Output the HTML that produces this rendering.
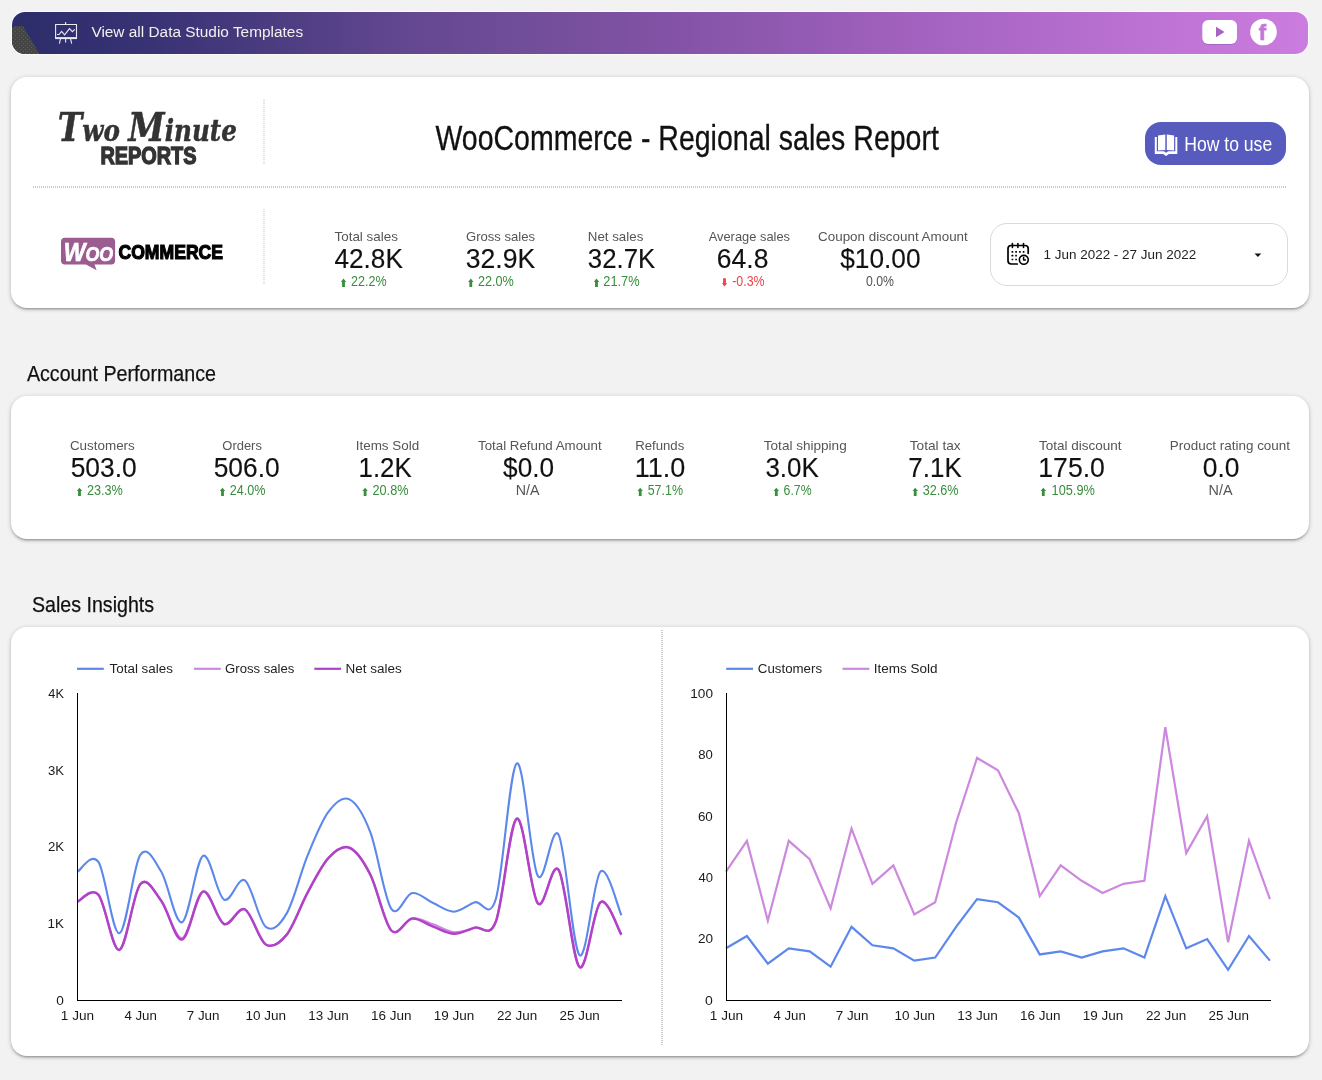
<!DOCTYPE html>
<html lang="en">
<head>
<meta charset="utf-8">
<title>WooCommerce - Regional sales Report</title>
<style>
  html,body{margin:0;padding:0;}
  body{width:1322px;height:1080px;background:#f2f2f2;position:relative;overflow:hidden;font-family:"Liberation Sans",Arial,sans-serif;}
  .topbar{position:absolute;left:12px;top:12px;width:1296px;height:42px;border-radius:13px;overflow:hidden;box-shadow:0 0 0 1px rgba(255,255,255,.6);
    background:linear-gradient(90deg,#2c2d6b 0%,#373274 10%,#4b3c80 20%,#62478f 30%,#724e99 40%,#8152a5 50%,#a362bf 70%,#bd73d4 88%,#cb7cdf 100%);}
  .card{position:absolute;left:11px;width:1298px;background:#fff;border-radius:16px;box-shadow:0 2px 2px 0 rgba(0,0,0,.14),0 3px 1px -2px rgba(0,0,0,.12),0 1px 5px 0 rgba(0,0,0,.2);}
  #c1{top:77px;height:231px;}
  #c2{top:396px;height:143px;}
  #c3{top:627px;height:429px;}
  .hdot{position:absolute;left:33px;top:186px;width:1253px;height:2px;background-image:repeating-linear-gradient(90deg,#aaa 0 1px,transparent 1px 2px);opacity:.62;}
  .vdot{position:absolute;width:2px;background-image:repeating-linear-gradient(180deg,#aaa 0 1px,transparent 1px 2px);opacity:.38;}
  .btn{position:absolute;left:1145px;top:122px;width:141px;height:43px;border-radius:16px;background:#575bbd;}
  .datebox{position:absolute;left:990px;top:223px;width:295.5px;height:61px;border:1px solid #dadada;border-radius:17px;background:#fff;}
  svg#ov{position:absolute;left:0;top:0;will-change:transform;}
</style>
</head>
<body>
<div class="topbar"></div>
<div class="card" id="c1"></div>
<div class="card" id="c2"></div>
<div class="card" id="c3"></div>
<div class="hdot"></div>
<div class="vdot" style="left:263px;top:99px;height:66px"></div>
<div class="vdot" style="left:263px;top:209px;height:76px"></div>
<div class="vdot" style="left:661px;top:630px;height:415px;opacity:.62"></div>
<div class="btn"></div>
<div class="datebox"></div>
<svg id="ov" width="1322" height="1080" viewBox="0 0 1322 1080">
<!-- decorative blob -->
<defs>
  <clipPath id="barclip"><rect x="12" y="12" width="1296" height="42" rx="13" ry="13"/></clipPath>
  <pattern id="dots" x="0" y="0" width="4" height="4" patternUnits="userSpaceOnUse"><rect x="1" y="1" width="1" height="1" fill="#8a5bb0"/><rect x="3" y="3" width="1" height="1" fill="#8a5bb0"/></pattern>
</defs>
<g clip-path="url(#barclip)">
  <path d="M12 27.5 L14 26.3 L23 26 L39.5 54 L12 54Z" fill="#454545"/>
  <path d="M12 27.5 L14 26.3 L23 26 L39.5 54 L12 54Z" fill="url(#dots)" opacity=".55"/>
</g>
<!-- presentation icon -->
<g fill="none" stroke="#ece9f3" stroke-width="1.1" stroke-linejoin="miter">
  <path d="M55.6 24.5H76.5V37.8H55.6Z"/>
  <path d="M55.1 38.3H77" stroke-width="1.6"/>
  <path d="M65.6 22V24.5 M60.4 39L59.4 43.6 M65.6 39V42.6 M70.6 39L71.7 43.6"/>
  <path d="M57 34.5H59L61.6 31.3L64.6 34.8L69.5 28.7L72.4 31.7L74.8 29.4" stroke-width="1.1"/>
</g>
<!-- youtube -->
<rect x="1202.6" y="21" width="34.2" height="24" rx="6" ry="6" fill="#8e55b4" opacity=".55"/>
<rect x="1202.3" y="20" width="34.7" height="24" rx="6" ry="6" fill="#fff"/>
<path d="M1216 26.8L1224.6 32L1216 37.2Z" fill="#a763c3"/>
<!-- facebook -->
<circle cx="1263.5" cy="32" r="13.3" fill="#fff"/>
<text x="1258.8" y="39.8" font-size="22" font-weight="bold" fill="#c277d9" stroke="#c277d9" stroke-width="0.7" font-family='"Liberation Sans", Arial, sans-serif'>f</text>
<!-- book icon -->
<g fill="#fff">
  <path d="M1158 135.4 L1165.3 134.5 L1165.3 150 L1158 150.4 Z"/>
  <path d="M1166.8 134.5 L1174.1 135.4 L1174.1 150.4 L1166.8 150 Z"/>
  <path d="M1154.8 137 L1156.8 137 L1156.8 151.3 L1164 151.3 L1166.05 152.8 L1168.1 151.3 L1175.3 151.3 L1175.3 137 L1177.3 137 L1177.3 154.1 L1169 154.1 L1166.05 156.1 L1163.1 154.1 L1154.8 154.1 Z"/>
</g>
<!-- calendar icon -->
<g fill="none" stroke="#000" stroke-width="1.7" stroke-linecap="round" stroke-linejoin="round">
  <path d="M1017.3 264H1011.2Q1008 264 1008 260.8V248.7Q1008 245.5 1011.2 245.5H1025Q1028.2 245.5 1028.2 248.7V253.3"/>
  <path d="M1012.4 243.5V247.5 M1017.9 243.5V247.5 M1023.5 243.5V247.5" stroke-width="1.6"/>
  <circle cx="1023.8" cy="259.8" r="4.45" stroke-width="1.6"/>
  <path d="M1023.6 257.6V260H1025.4" stroke-width="1.5"/>
</g>
<g fill="#000"><rect x="1011.55" y="251.05" width="1.7" height="1.7" rx=".3"/><rect x="1015.25" y="251.05" width="1.7" height="1.7" rx=".3"/><rect x="1019.05" y="251.05" width="1.7" height="1.7" rx=".3"/><rect x="1022.75" y="251.05" width="1.7" height="1.7" rx=".3"/><rect x="1011.55" y="254.85" width="1.7" height="1.7" rx=".3"/><rect x="1015.25" y="254.85" width="1.7" height="1.7" rx=".3"/><rect x="1011.55" y="258.65" width="1.7" height="1.7" rx=".3"/><rect x="1015.25" y="258.65" width="1.7" height="1.7" rx=".3"/></g>
<path d="M1254.5 253.4L1261.3 253.4L1257.9 257Z" fill="#111"/>
<!-- Two Minute Reports logo -->
<text x="57.8" y="141" font-size="30" font-weight="bold" font-style="italic" fill="#333" stroke="#333" stroke-width="0.5" font-family='"DejaVu Serif", "Liberation Serif", serif' textLength="179" lengthAdjust="spacingAndGlyphs"><tspan font-size="40">T</tspan>wo <tspan font-size="40">M</tspan>inute</text>
<text x="100.5" y="164.1" font-size="24.2" font-weight="bold" fill="#333" stroke="#333" stroke-width="1.4" stroke-linejoin="miter" font-family='"Liberation Sans", Arial, sans-serif' textLength="96" lengthAdjust="spacingAndGlyphs">REPORTS</text>
<!-- WooCommerce logo -->
<path d="M65 237.8H111.1Q115.1 237.8 115.1 241.8V260.6Q115.1 264.6 111.1 264.6H94.5L96.6 270.2L86 264.6H65Q61 264.6 61 260.6V241.8Q61 237.8 65 237.8Z" fill="#9b5c8f"/>
<text x="63.8" y="261.2" font-size="20.5" font-weight="bold" font-style="italic" fill="#fff" stroke="#fff" stroke-width="0.7" font-family='"Liberation Sans", Arial, sans-serif' textLength="49.4" lengthAdjust="spacingAndGlyphs"><tspan font-size="26.5">W</tspan>OO</text>
<text x="118.5" y="258.8" font-size="20.2" font-weight="bold" fill="#000" stroke="#000" stroke-width="1.2" stroke-linejoin="miter" font-family='"Liberation Sans", Arial, sans-serif' textLength="104.5" lengthAdjust="spacingAndGlyphs">COMMERCE</text>

<text x="334.5" y="241.2" font-size="13.6" fill="#555" font-weight="normal" font-style="normal" font-family='"Liberation Sans", Arial, sans-serif' textLength="63.4" lengthAdjust="spacingAndGlyphs" >Total sales</text>
<text x="334.4" y="267.5" font-size="27.5" fill="#111" font-weight="normal" font-style="normal" font-family='"Liberation Sans", Arial, sans-serif' textLength="68.5" lengthAdjust="spacingAndGlyphs" stroke="#111" stroke-width="0.15">42.8K</text>
<path d="M343.5 278.5 L346.2 281.9 L344.9 281.9 L344.9 286.9 L342.1 286.9 L342.1 281.9 L340.8 281.9 Z" fill="#388e3c"/>
<text x="351.1" y="285.8" font-size="14" fill="#388e3c" font-weight="normal" font-style="normal" font-family='"Liberation Sans", Arial, sans-serif' textLength="35.6" lengthAdjust="spacingAndGlyphs" >22.2%</text>
<text x="466.0" y="241.2" font-size="13.6" fill="#555" font-weight="normal" font-style="normal" font-family='"Liberation Sans", Arial, sans-serif' textLength="69.1" lengthAdjust="spacingAndGlyphs" >Gross sales</text>
<text x="465.7" y="267.5" font-size="27.5" fill="#111" font-weight="normal" font-style="normal" font-family='"Liberation Sans", Arial, sans-serif' textLength="69.5" lengthAdjust="spacingAndGlyphs" stroke="#111" stroke-width="0.15">32.9K</text>
<path d="M470.8 278.5 L473.5 281.9 L472.2 281.9 L472.2 286.9 L469.4 286.9 L469.4 281.9 L468.1 281.9 Z" fill="#388e3c"/>
<text x="477.9" y="285.8" font-size="14" fill="#388e3c" font-weight="normal" font-style="normal" font-family='"Liberation Sans", Arial, sans-serif' textLength="35.9" lengthAdjust="spacingAndGlyphs" >22.0%</text>
<text x="587.8" y="241.2" font-size="13.6" fill="#555" font-weight="normal" font-style="normal" font-family='"Liberation Sans", Arial, sans-serif' textLength="55.5" lengthAdjust="spacingAndGlyphs" >Net sales</text>
<text x="587.8" y="267.5" font-size="27.5" fill="#111" font-weight="normal" font-style="normal" font-family='"Liberation Sans", Arial, sans-serif' textLength="67.4" lengthAdjust="spacingAndGlyphs" stroke="#111" stroke-width="0.15">32.7K</text>
<path d="M596.5 278.5 L599.2 281.9 L597.9 281.9 L597.9 286.9 L595.1 286.9 L595.1 281.9 L593.8 281.9 Z" fill="#388e3c"/>
<text x="603.3" y="285.8" font-size="14" fill="#388e3c" font-weight="normal" font-style="normal" font-family='"Liberation Sans", Arial, sans-serif' textLength="36.3" lengthAdjust="spacingAndGlyphs" >21.7%</text>
<text x="708.7" y="241.2" font-size="13.6" fill="#555" font-weight="normal" font-style="normal" font-family='"Liberation Sans", Arial, sans-serif' textLength="81.3" lengthAdjust="spacingAndGlyphs" >Average sales</text>
<text x="716.8" y="267.5" font-size="27.5" fill="#111" font-weight="normal" font-style="normal" font-family='"Liberation Sans", Arial, sans-serif' textLength="51.6" lengthAdjust="spacingAndGlyphs" stroke="#111" stroke-width="0.15">64.8</text>
<path d="M724.5 286.6 L727.2 283.2 L725.9 283.2 L725.9 278.2 L723.1 278.2 L723.1 283.2 L721.8 283.2 Z" fill="#ef4444"/>
<text x="732.2" y="285.8" font-size="14" fill="#ef4444" font-weight="normal" font-style="normal" font-family='"Liberation Sans", Arial, sans-serif' textLength="32.4" lengthAdjust="spacingAndGlyphs" >-0.3%</text>
<text x="818.1" y="241.2" font-size="13.6" fill="#555" font-weight="normal" font-style="normal" font-family='"Liberation Sans", Arial, sans-serif' textLength="149.7" lengthAdjust="spacingAndGlyphs" >Coupon discount Amount</text>
<text x="840.2" y="267.5" font-size="27.5" fill="#111" font-weight="normal" font-style="normal" font-family='"Liberation Sans", Arial, sans-serif' textLength="80.3" lengthAdjust="spacingAndGlyphs" stroke="#111" stroke-width="0.15">$10.00</text>
<text x="865.9" y="285.8" font-size="14" fill="#555" font-weight="normal" font-style="normal" font-family='"Liberation Sans", Arial, sans-serif' textLength="28.0" lengthAdjust="spacingAndGlyphs" >0.0%</text>
<text x="69.9" y="450.0" font-size="13.6" fill="#555" font-weight="normal" font-style="normal" font-family='"Liberation Sans", Arial, sans-serif' textLength="64.9" lengthAdjust="spacingAndGlyphs" >Customers</text>
<text x="70.7" y="477.0" font-size="27.5" fill="#111" font-weight="normal" font-style="normal" font-family='"Liberation Sans", Arial, sans-serif' textLength="66.0" lengthAdjust="spacingAndGlyphs" stroke="#111" stroke-width="0.15">503.0</text>
<path d="M79.5 487.7 L82.2 491.1 L80.9 491.1 L80.9 496.1 L78.1 496.1 L78.1 491.1 L76.8 491.1 Z" fill="#388e3c"/>
<text x="86.9" y="495.0" font-size="14" fill="#388e3c" font-weight="normal" font-style="normal" font-family='"Liberation Sans", Arial, sans-serif' textLength="36.0" lengthAdjust="spacingAndGlyphs" >23.3%</text>
<text x="222.3" y="450.0" font-size="13.6" fill="#555" font-weight="normal" font-style="normal" font-family='"Liberation Sans", Arial, sans-serif' textLength="39.6" lengthAdjust="spacingAndGlyphs" >Orders</text>
<text x="213.7" y="477.0" font-size="27.5" fill="#111" font-weight="normal" font-style="normal" font-family='"Liberation Sans", Arial, sans-serif' textLength="66.0" lengthAdjust="spacingAndGlyphs" stroke="#111" stroke-width="0.15">506.0</text>
<path d="M222.5 487.7 L225.2 491.1 L223.9 491.1 L223.9 496.1 L221.1 496.1 L221.1 491.1 L219.8 491.1 Z" fill="#388e3c"/>
<text x="229.8" y="495.0" font-size="14" fill="#388e3c" font-weight="normal" font-style="normal" font-family='"Liberation Sans", Arial, sans-serif' textLength="35.7" lengthAdjust="spacingAndGlyphs" >24.0%</text>
<text x="355.7" y="450.0" font-size="13.6" fill="#555" font-weight="normal" font-style="normal" font-family='"Liberation Sans", Arial, sans-serif' textLength="63.5" lengthAdjust="spacingAndGlyphs" >Items Sold</text>
<text x="358.6" y="477.0" font-size="27.5" fill="#111" font-weight="normal" font-style="normal" font-family='"Liberation Sans", Arial, sans-serif' textLength="53.1" lengthAdjust="spacingAndGlyphs" stroke="#111" stroke-width="0.15">1.2K</text>
<path d="M365.1 487.7 L367.8 491.1 L366.5 491.1 L366.5 496.1 L363.7 496.1 L363.7 491.1 L362.4 491.1 Z" fill="#388e3c"/>
<text x="372.5" y="495.0" font-size="14" fill="#388e3c" font-weight="normal" font-style="normal" font-family='"Liberation Sans", Arial, sans-serif' textLength="36.0" lengthAdjust="spacingAndGlyphs" >20.8%</text>
<text x="478.0" y="450.0" font-size="13.6" fill="#555" font-weight="normal" font-style="normal" font-family='"Liberation Sans", Arial, sans-serif' textLength="123.6" lengthAdjust="spacingAndGlyphs" >Total Refund Amount</text>
<text x="503.1" y="477.0" font-size="27.5" fill="#111" font-weight="normal" font-style="normal" font-family='"Liberation Sans", Arial, sans-serif' textLength="51.0" lengthAdjust="spacingAndGlyphs" stroke="#111" stroke-width="0.15">$0.0</text>
<text x="515.7" y="495.0" font-size="14" fill="#555" font-weight="normal" font-style="normal" font-family='"Liberation Sans", Arial, sans-serif' textLength="23.8" lengthAdjust="spacingAndGlyphs" >N/A</text>
<text x="635.2" y="450.0" font-size="13.6" fill="#555" font-weight="normal" font-style="normal" font-family='"Liberation Sans", Arial, sans-serif' textLength="49.1" lengthAdjust="spacingAndGlyphs" >Refunds</text>
<text x="634.8" y="477.0" font-size="27.5" fill="#111" font-weight="normal" font-style="normal" font-family='"Liberation Sans", Arial, sans-serif' textLength="50.6" lengthAdjust="spacingAndGlyphs" stroke="#111" stroke-width="0.15">11.0</text>
<path d="M640.2 487.7 L642.9 491.1 L641.6 491.1 L641.6 496.1 L638.8 496.1 L638.8 491.1 L637.5 491.1 Z" fill="#388e3c"/>
<text x="647.7" y="495.0" font-size="14" fill="#388e3c" font-weight="normal" font-style="normal" font-family='"Liberation Sans", Arial, sans-serif' textLength="35.3" lengthAdjust="spacingAndGlyphs" >57.1%</text>
<text x="763.8" y="450.0" font-size="13.6" fill="#555" font-weight="normal" font-style="normal" font-family='"Liberation Sans", Arial, sans-serif' textLength="82.9" lengthAdjust="spacingAndGlyphs" >Total shipping</text>
<text x="765.4" y="477.0" font-size="27.5" fill="#111" font-weight="normal" font-style="normal" font-family='"Liberation Sans", Arial, sans-serif' textLength="53.4" lengthAdjust="spacingAndGlyphs" stroke="#111" stroke-width="0.15">3.0K</text>
<path d="M776.3 487.7 L779.0 491.1 L777.7 491.1 L777.7 496.1 L774.9 496.1 L774.9 491.1 L773.6 491.1 Z" fill="#388e3c"/>
<text x="783.6" y="495.0" font-size="14" fill="#388e3c" font-weight="normal" font-style="normal" font-family='"Liberation Sans", Arial, sans-serif' textLength="28.0" lengthAdjust="spacingAndGlyphs" >6.7%</text>
<text x="909.8" y="450.0" font-size="13.6" fill="#555" font-weight="normal" font-style="normal" font-family='"Liberation Sans", Arial, sans-serif' textLength="50.8" lengthAdjust="spacingAndGlyphs" >Total tax</text>
<text x="908.3" y="477.0" font-size="27.5" fill="#111" font-weight="normal" font-style="normal" font-family='"Liberation Sans", Arial, sans-serif' textLength="53.4" lengthAdjust="spacingAndGlyphs" stroke="#111" stroke-width="0.15">7.1K</text>
<path d="M915.2 487.7 L917.9 491.1 L916.6 491.1 L916.6 496.1 L913.8 496.1 L913.8 491.1 L912.5 491.1 Z" fill="#388e3c"/>
<text x="922.7" y="495.0" font-size="14" fill="#388e3c" font-weight="normal" font-style="normal" font-family='"Liberation Sans", Arial, sans-serif' textLength="35.7" lengthAdjust="spacingAndGlyphs" >32.6%</text>
<text x="1038.9" y="450.0" font-size="13.6" fill="#555" font-weight="normal" font-style="normal" font-family='"Liberation Sans", Arial, sans-serif' textLength="82.6" lengthAdjust="spacingAndGlyphs" >Total discount</text>
<text x="1038.3" y="477.0" font-size="27.5" fill="#111" font-weight="normal" font-style="normal" font-family='"Liberation Sans", Arial, sans-serif' textLength="66.6" lengthAdjust="spacingAndGlyphs" stroke="#111" stroke-width="0.15">175.0</text>
<path d="M1043.3 487.7 L1046.0 491.1 L1044.7 491.1 L1044.7 496.1 L1041.9 496.1 L1041.9 491.1 L1040.6 491.1 Z" fill="#388e3c"/>
<text x="1051.6" y="495.0" font-size="14" fill="#388e3c" font-weight="normal" font-style="normal" font-family='"Liberation Sans", Arial, sans-serif' textLength="43.2" lengthAdjust="spacingAndGlyphs" >105.9%</text>
<text x="1169.8" y="450.0" font-size="13.6" fill="#555" font-weight="normal" font-style="normal" font-family='"Liberation Sans", Arial, sans-serif' textLength="120.2" lengthAdjust="spacingAndGlyphs" >Product rating count</text>
<text x="1202.8" y="477.0" font-size="27.5" fill="#111" font-weight="normal" font-style="normal" font-family='"Liberation Sans", Arial, sans-serif' textLength="36.7" lengthAdjust="spacingAndGlyphs" stroke="#111" stroke-width="0.15">0.0</text>
<text x="1208.5" y="495.0" font-size="14" fill="#555" font-weight="normal" font-style="normal" font-family='"Liberation Sans", Arial, sans-serif' textLength="24.0" lengthAdjust="spacingAndGlyphs" >N/A</text>
<text x="26.9" y="380.9" font-size="22.5" fill="#111" font-weight="normal" font-style="normal" font-family='"Liberation Sans", Arial, sans-serif' textLength="189.1" lengthAdjust="spacingAndGlyphs" stroke="#111" stroke-width="0.25">Account Performance</text>
<text x="31.9" y="611.6" font-size="22.5" fill="#111" font-weight="normal" font-style="normal" font-family='"Liberation Sans", Arial, sans-serif' textLength="122.2" lengthAdjust="spacingAndGlyphs" stroke="#111" stroke-width="0.25">Sales Insights</text>
<text x="435.4" y="149.8" font-size="34.5" fill="#111" font-weight="normal" font-style="normal" font-family='"Liberation Sans", Arial, sans-serif' textLength="503.5" lengthAdjust="spacingAndGlyphs" stroke="#111" stroke-width="0.3">WooCommerce - Regional sales Report</text>
<text x="91.4" y="36.9" font-size="15.5" fill="#f3f1ee" font-weight="normal" font-style="normal" font-family='"Liberation Sans", Arial, sans-serif' textLength="211.7" lengthAdjust="spacingAndGlyphs" >View all Data Studio Templates</text>
<text x="1184.2" y="150.7" font-size="20.3" fill="#fff" font-weight="normal" font-style="normal" font-family='"Liberation Sans", Arial, sans-serif' textLength="88.0" lengthAdjust="spacingAndGlyphs" >How to use</text>
<text x="1043.5" y="258.8" font-size="13" fill="#222" font-weight="normal" font-style="normal" font-family='"Liberation Sans", Arial, sans-serif' textLength="152.7" lengthAdjust="spacingAndGlyphs" >1 Jun 2022 - 27 Jun 2022</text>
<path d="M77.50 871.71 C80.99 870.08 91.45 851.63 98.42 861.89 C105.39 872.15 112.37 934.43 119.34 933.27 C126.31 932.10 133.29 865.19 140.26 854.91 C147.23 844.62 154.21 860.34 161.18 871.56 C168.15 882.78 175.13 924.84 182.10 922.22 C189.07 919.59 196.05 859.60 203.02 855.83 C209.99 852.05 216.97 895.48 223.94 899.57 C230.91 903.67 237.89 875.85 244.86 880.39 C251.83 884.93 258.81 921.32 265.78 926.82 C272.75 932.32 279.73 925.28 286.70 913.39 C293.67 901.49 300.65 872.39 307.62 855.44 C314.59 838.49 321.57 821.03 328.54 811.69 C335.51 802.36 342.49 795.96 349.46 799.41 C356.43 802.87 363.41 814.19 370.38 832.42 C377.35 850.65 384.33 898.68 391.30 908.78 C398.27 918.89 405.25 894.01 412.22 893.05 C419.19 892.09 426.17 899.92 433.14 903.03 C440.11 906.14 447.09 911.83 454.06 911.70 C461.03 911.57 468.01 904.41 474.98 902.26 C481.95 900.11 488.93 921.96 495.90 898.81 C502.87 875.65 509.85 767.19 516.82 763.34 C523.79 759.49 530.77 863.78 537.74 875.70 C544.71 887.63 551.69 821.62 558.66 834.87 C565.63 848.13 572.61 949.10 579.58 955.22 C586.55 961.33 593.53 878.21 600.50 871.56 C607.47 864.91 617.93 908.02 621.42 915.31" fill="none" stroke="#5c88ec" stroke-width="2.1" stroke-linejoin="round"/>
<path d="M77.50 901.65 C80.99 900.49 91.45 886.69 98.42 894.74 C105.39 902.78 112.37 951.67 119.34 949.92 C126.31 948.17 133.29 892.42 140.26 884.22 C147.23 876.02 154.21 891.76 161.18 900.73 C168.15 909.69 175.13 939.55 182.10 938.03 C189.07 936.50 196.05 893.93 203.02 891.59 C209.99 889.25 216.97 921.01 223.94 923.98 C230.91 926.95 237.89 905.98 244.86 909.40 C251.83 912.81 258.81 940.26 265.78 944.47 C272.75 948.68 279.73 943.30 286.70 934.65 C293.67 926.00 300.65 905.38 307.62 892.59 C314.59 879.80 321.57 865.37 328.54 857.90 C335.51 850.43 342.49 844.97 349.46 847.77 C356.43 850.57 363.41 860.92 370.38 874.71 C377.35 888.50 384.33 923.20 391.30 930.50 C398.27 937.81 405.25 919.57 412.22 918.53 C419.19 917.49 426.17 922.01 433.14 924.29 C440.11 926.56 447.09 931.64 454.06 932.19 C461.03 932.74 468.01 929.38 474.98 927.59 C481.95 925.80 488.93 939.60 495.90 921.45 C502.87 903.30 509.85 821.71 516.82 818.68 C523.79 815.65 530.77 894.70 537.74 903.26 C544.71 911.82 551.69 859.38 558.66 870.02 C565.63 880.67 572.61 961.74 579.58 967.11 C586.55 972.49 593.53 907.66 600.50 902.26 C607.47 896.86 617.93 929.31 621.42 934.73" fill="none" stroke="#cd88df" stroke-width="2.1" stroke-linejoin="round"/>
<path d="M77.50 901.65 C80.99 900.49 91.45 886.69 98.42 894.74 C105.39 902.78 112.37 951.67 119.34 949.92 C126.31 948.17 133.29 892.42 140.26 884.22 C147.23 876.02 154.21 891.50 161.18 900.73 C168.15 909.95 175.13 941.08 182.10 939.56 C189.07 938.04 196.05 894.19 203.02 891.59 C209.99 889.00 216.97 921.01 223.94 923.98 C230.91 926.95 237.89 905.98 244.86 909.40 C251.83 912.81 258.81 940.26 265.78 944.47 C272.75 948.68 279.73 943.30 286.70 934.65 C293.67 926.00 300.65 905.38 307.62 892.59 C314.59 879.80 321.57 865.37 328.54 857.90 C335.51 850.43 342.49 844.97 349.46 847.77 C356.43 850.57 363.41 860.92 370.38 874.71 C377.35 888.50 384.33 923.20 391.30 930.50 C398.27 937.81 405.25 919.18 412.22 918.53 C419.19 917.88 426.17 924.06 433.14 926.59 C440.11 929.12 447.09 933.56 454.06 933.73 C461.03 933.89 468.01 929.63 474.98 927.59 C481.95 925.54 488.93 939.60 495.90 921.45 C502.87 903.30 509.85 821.71 516.82 818.68 C523.79 815.65 530.77 894.70 537.74 903.26 C544.71 911.82 551.69 859.38 558.66 870.02 C565.63 880.67 572.61 961.74 579.58 967.11 C586.55 972.49 593.53 907.66 600.50 902.26 C607.47 896.86 617.93 929.31 621.42 934.73" fill="none" stroke="#b142c8" stroke-width="2.5" stroke-linejoin="round"/>
<path d="M726.00 871.56 L746.92 840.86 L767.84 920.68 L788.76 840.86 L809.68 859.28 L830.60 908.40 L851.52 828.58 L872.44 883.84 L893.36 865.42 L914.28 914.54 L935.20 902.26 L956.12 822.44 L977.04 757.97 L997.96 770.25 L1018.88 813.23 L1039.80 896.12 L1060.72 865.42 L1081.64 880.77 L1102.56 893.05 L1123.48 883.84 L1144.40 880.77 L1165.32 727.27 L1186.24 853.14 L1207.16 816.30 L1228.08 942.17 L1249.00 840.86 L1269.92 899.19" fill="none" stroke="#cd88df" stroke-width="2.2" stroke-linejoin="miter"/>
<path d="M726.00 948.31 L746.92 936.03 L767.84 963.66 L788.76 948.31 L809.68 951.38 L830.60 966.73 L851.52 926.82 L872.44 945.24 L893.36 948.31 L914.28 960.59 L935.20 957.52 L956.12 926.82 L977.04 899.19 L997.96 902.26 L1018.88 917.61 L1039.80 954.45 L1060.72 951.38 L1081.64 957.52 L1102.56 951.38 L1123.48 948.31 L1144.40 957.52 L1165.32 896.12 L1186.24 948.31 L1207.16 939.10 L1228.08 969.80 L1249.00 936.03 L1269.92 960.59" fill="none" stroke="#5c88ec" stroke-width="2.2" stroke-linejoin="miter"/>
<path d="M77.5 693.0 V1000.5 H622.0" fill="none" stroke="#000" stroke-width="1" shape-rendering="crispEdges"/>
<path d="M726.5 693.0 V1000.5 H1271.0" fill="none" stroke="#000" stroke-width="1" shape-rendering="crispEdges"/>
<text x="56.3" y="1004.7" font-size="13" fill="#1a1a1a" font-weight="normal" font-style="normal" font-family='"Liberation Sans", Arial, sans-serif' textLength="7.6" lengthAdjust="spacingAndGlyphs" >0</text>
<text x="47.6" y="928.0" font-size="13" fill="#1a1a1a" font-weight="normal" font-style="normal" font-family='"Liberation Sans", Arial, sans-serif' textLength="16.4" lengthAdjust="spacingAndGlyphs" >1K</text>
<text x="47.9" y="851.2" font-size="13" fill="#1a1a1a" font-weight="normal" font-style="normal" font-family='"Liberation Sans", Arial, sans-serif' textLength="16.2" lengthAdjust="spacingAndGlyphs" >2K</text>
<text x="47.9" y="774.5" font-size="13" fill="#1a1a1a" font-weight="normal" font-style="normal" font-family='"Liberation Sans", Arial, sans-serif' textLength="16.1" lengthAdjust="spacingAndGlyphs" >3K</text>
<text x="48.3" y="697.7" font-size="13" fill="#1a1a1a" font-weight="normal" font-style="normal" font-family='"Liberation Sans", Arial, sans-serif' textLength="15.6" lengthAdjust="spacingAndGlyphs" >4K</text>
<text x="705.1" y="1004.7" font-size="13" fill="#1a1a1a" font-weight="normal" font-style="normal" font-family='"Liberation Sans", Arial, sans-serif' textLength="7.8" lengthAdjust="spacingAndGlyphs" >0</text>
<text x="697.9" y="943.3" font-size="13" fill="#1a1a1a" font-weight="normal" font-style="normal" font-family='"Liberation Sans", Arial, sans-serif' textLength="15.1" lengthAdjust="spacingAndGlyphs" >20</text>
<text x="698.4" y="881.9" font-size="13" fill="#1a1a1a" font-weight="normal" font-style="normal" font-family='"Liberation Sans", Arial, sans-serif' textLength="14.5" lengthAdjust="spacingAndGlyphs" >40</text>
<text x="697.9" y="820.5" font-size="13" fill="#1a1a1a" font-weight="normal" font-style="normal" font-family='"Liberation Sans", Arial, sans-serif' textLength="14.9" lengthAdjust="spacingAndGlyphs" >60</text>
<text x="698.2" y="759.1" font-size="13" fill="#1a1a1a" font-weight="normal" font-style="normal" font-family='"Liberation Sans", Arial, sans-serif' textLength="14.6" lengthAdjust="spacingAndGlyphs" >80</text>
<text x="690.3" y="697.7" font-size="13" fill="#1a1a1a" font-weight="normal" font-style="normal" font-family='"Liberation Sans", Arial, sans-serif' textLength="22.7" lengthAdjust="spacingAndGlyphs" >100</text>
<text x="60.8" y="1020.0" font-size="13" fill="#1a1a1a" font-weight="normal" font-style="normal" font-family='"Liberation Sans", Arial, sans-serif' textLength="33.3" lengthAdjust="spacingAndGlyphs" >1 Jun</text>
<text x="124.4" y="1020.0" font-size="13" fill="#1a1a1a" font-weight="normal" font-style="normal" font-family='"Liberation Sans", Arial, sans-serif' textLength="32.5" lengthAdjust="spacingAndGlyphs" >4 Jun</text>
<text x="186.7" y="1020.0" font-size="13" fill="#1a1a1a" font-weight="normal" font-style="normal" font-family='"Liberation Sans", Arial, sans-serif' textLength="32.9" lengthAdjust="spacingAndGlyphs" >7 Jun</text>
<text x="245.5" y="1020.0" font-size="13" fill="#1a1a1a" font-weight="normal" font-style="normal" font-family='"Liberation Sans", Arial, sans-serif' textLength="40.6" lengthAdjust="spacingAndGlyphs" >10 Jun</text>
<text x="308.2" y="1020.0" font-size="13" fill="#1a1a1a" font-weight="normal" font-style="normal" font-family='"Liberation Sans", Arial, sans-serif' textLength="40.5" lengthAdjust="spacingAndGlyphs" >13 Jun</text>
<text x="370.9" y="1020.0" font-size="13" fill="#1a1a1a" font-weight="normal" font-style="normal" font-family='"Liberation Sans", Arial, sans-serif' textLength="40.5" lengthAdjust="spacingAndGlyphs" >16 Jun</text>
<text x="433.8" y="1020.0" font-size="13" fill="#1a1a1a" font-weight="normal" font-style="normal" font-family='"Liberation Sans", Arial, sans-serif' textLength="40.5" lengthAdjust="spacingAndGlyphs" >19 Jun</text>
<text x="496.9" y="1020.0" font-size="13" fill="#1a1a1a" font-weight="normal" font-style="normal" font-family='"Liberation Sans", Arial, sans-serif' textLength="40.4" lengthAdjust="spacingAndGlyphs" >22 Jun</text>
<text x="559.6" y="1020.0" font-size="13" fill="#1a1a1a" font-weight="normal" font-style="normal" font-family='"Liberation Sans", Arial, sans-serif' textLength="40.2" lengthAdjust="spacingAndGlyphs" >25 Jun</text>
<text x="709.8" y="1020.0" font-size="13" fill="#1a1a1a" font-weight="normal" font-style="normal" font-family='"Liberation Sans", Arial, sans-serif' textLength="33.3" lengthAdjust="spacingAndGlyphs" >1 Jun</text>
<text x="773.4" y="1020.0" font-size="13" fill="#1a1a1a" font-weight="normal" font-style="normal" font-family='"Liberation Sans", Arial, sans-serif' textLength="32.4" lengthAdjust="spacingAndGlyphs" >4 Jun</text>
<text x="835.7" y="1020.0" font-size="13" fill="#1a1a1a" font-weight="normal" font-style="normal" font-family='"Liberation Sans", Arial, sans-serif' textLength="32.9" lengthAdjust="spacingAndGlyphs" >7 Jun</text>
<text x="894.5" y="1020.0" font-size="13" fill="#1a1a1a" font-weight="normal" font-style="normal" font-family='"Liberation Sans", Arial, sans-serif' textLength="40.6" lengthAdjust="spacingAndGlyphs" >10 Jun</text>
<text x="957.2" y="1020.0" font-size="13" fill="#1a1a1a" font-weight="normal" font-style="normal" font-family='"Liberation Sans", Arial, sans-serif' textLength="40.6" lengthAdjust="spacingAndGlyphs" >13 Jun</text>
<text x="1019.9" y="1020.0" font-size="13" fill="#1a1a1a" font-weight="normal" font-style="normal" font-family='"Liberation Sans", Arial, sans-serif' textLength="40.5" lengthAdjust="spacingAndGlyphs" >16 Jun</text>
<text x="1082.8" y="1020.0" font-size="13" fill="#1a1a1a" font-weight="normal" font-style="normal" font-family='"Liberation Sans", Arial, sans-serif' textLength="40.5" lengthAdjust="spacingAndGlyphs" >19 Jun</text>
<text x="1145.9" y="1020.0" font-size="13" fill="#1a1a1a" font-weight="normal" font-style="normal" font-family='"Liberation Sans", Arial, sans-serif' textLength="40.4" lengthAdjust="spacingAndGlyphs" >22 Jun</text>
<text x="1208.6" y="1020.0" font-size="13" fill="#1a1a1a" font-weight="normal" font-style="normal" font-family='"Liberation Sans", Arial, sans-serif' textLength="40.3" lengthAdjust="spacingAndGlyphs" >25 Jun</text>
<rect x="77.0" y="667.7" width="26.8" height="2.2" fill="#5c88ec"/>
<text x="109.6" y="673.1" font-size="13.7" fill="#222" font-weight="normal" font-style="normal" font-family='"Liberation Sans", Arial, sans-serif' textLength="63.3" lengthAdjust="spacingAndGlyphs" >Total sales</text>
<rect x="194.0" y="667.7" width="26.8" height="2.2" fill="#cd88df"/>
<text x="225.1" y="673.1" font-size="13.7" fill="#222" font-weight="normal" font-style="normal" font-family='"Liberation Sans", Arial, sans-serif' textLength="69.3" lengthAdjust="spacingAndGlyphs" >Gross sales</text>
<rect x="314.3" y="667.7" width="26.8" height="2.2" fill="#b142c8"/>
<text x="345.5" y="673.1" font-size="13.7" fill="#222" font-weight="normal" font-style="normal" font-family='"Liberation Sans", Arial, sans-serif' textLength="56.2" lengthAdjust="spacingAndGlyphs" >Net sales</text>
<rect x="726.2" y="667.7" width="26.8" height="2.2" fill="#5c88ec"/>
<text x="757.8" y="673.1" font-size="13.7" fill="#222" font-weight="normal" font-style="normal" font-family='"Liberation Sans", Arial, sans-serif' textLength="64.3" lengthAdjust="spacingAndGlyphs" >Customers</text>
<rect x="842.5" y="667.7" width="26.8" height="2.2" fill="#cd88df"/>
<text x="873.7" y="673.1" font-size="13.7" fill="#222" font-weight="normal" font-style="normal" font-family='"Liberation Sans", Arial, sans-serif' textLength="63.8" lengthAdjust="spacingAndGlyphs" >Items Sold</text>
</svg>
</body>
</html>
